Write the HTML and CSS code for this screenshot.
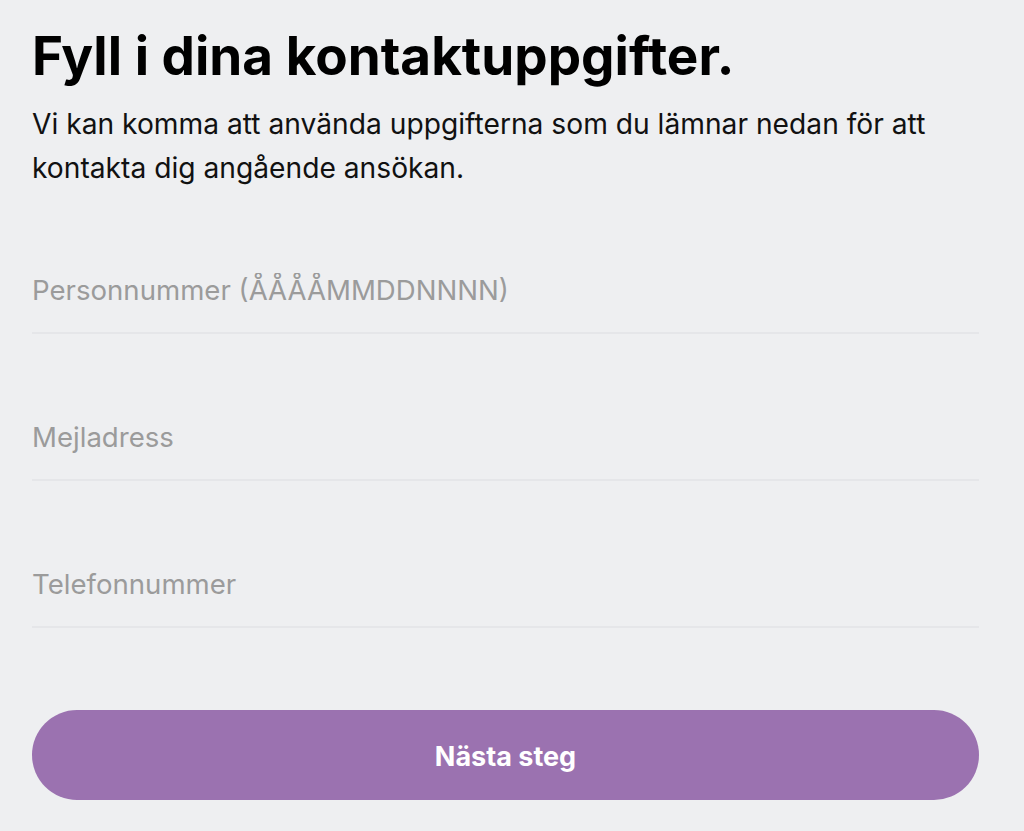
FILE: index.html
```html
<!DOCTYPE html>
<html lang="sv">
<head>
<meta charset="utf-8">
<title>Kontaktuppgifter</title>
<link rel="stylesheet" href="styles.css">
</head>
<body>
<main class="page">
  <h1 class="title">Fyll i dina kontaktuppgifter.</h1>
  <p class="intro">Vi kan komma att använda uppgifterna som du lämnar nedan för att kontakta dig angående ansökan.</p>
  <form class="form">
    <div class="field"><input class="input" type="text" placeholder="Personnummer (ÅÅÅÅMMDDNNNN)"></div>
    <div class="field"><input class="input" type="email" placeholder="Mejladress"></div>
    <div class="field"><input class="input" type="tel" placeholder="Telefonnummer"></div>
    <button class="submit" type="button">Nästa steg</button>
  </form>
</main>
</body>
</html>
```
FILE: styles.css
```css
html, body {
  margin: 0;
  padding: 0;
  background: #eeeff1;
}
.page {
  width: 947px;
  padding: 24px 0 0 32px;
  font-family: Inter, "Liberation Sans", sans-serif;
  color: #0a0a0a;
}
.title {
  margin: 0;
  font-size: 53px;
  line-height: 64px;
  font-weight: 700;
  color: #000;
}
.intro {
  margin: 14px 0 0;
  font-size: 28.2px;
  line-height: 44px;
  font-weight: 400;
  color: #111;
}
.form {
  display: flex;
  flex-direction: column;
}
.field {
  padding: 83px 0 22px;
  border-bottom: 2px solid #e5e6e9;
}
.field:first-child {
  padding-top: 80px;
}
.input {
  display: block;
  width: 100%;
  height: 40px;
  margin: 0;
  padding: 0;
  border: 0;
  outline: none;
  background: transparent;
  font-family: Inter, "Liberation Sans", sans-serif;
  font-size: 27.6px;
  color: #222;
}
.input::placeholder {
  color: #9b9b9b;
  opacity: 1;
}
.submit {
  margin-top: 82px;
  height: 90px;
  width: 100%;
  border: 0;
  border-radius: 45px;
  background: #9b72b0;
  color: #fff;
  font-family: Inter, "Liberation Sans", sans-serif;
  font-size: 27px;
  font-weight: 700;
  padding-top: 3px;
  cursor: pointer;
}
```
